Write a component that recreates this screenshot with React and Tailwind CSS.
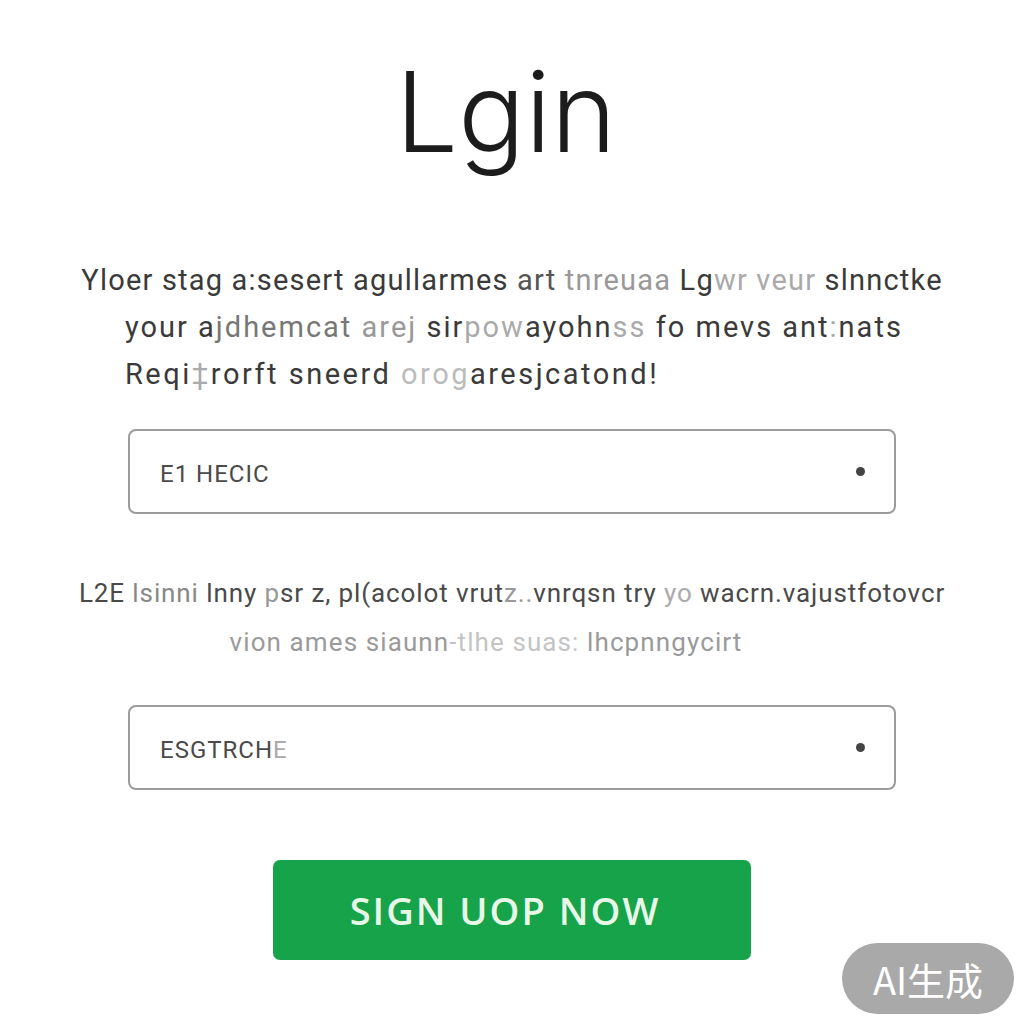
export default function App() {
  return (
    <div className="relative w-full h-screen bg-white overflow-hidden font-['Roboto',sans-serif]">
      <div className="flex flex-col items-center pt-[47px]">
        {/* Title */}
        <h1 className="mr-[12px] font-['Inter',sans-serif] font-light text-[111px] leading-[130px] text-[#1c1c1c] tracking-[0px]">
          Lgin
        </h1>

        {/* Intro copy */}
        <div className="mt-[80px] w-full text-[29px] leading-[47px] text-[#3a3a3a]">
          <p className="text-center whitespace-nowrap tracking-[1.2px]">
            Yloer stag a:sesert agullarmes <span className="text-[#555]">art</span>{" "}
            <span className="text-[#999]">tnreuaa</span> Lg<span className="text-[#aaa]">wr veur</span> slnnctke
          </p>
          <p className="pl-[125px] whitespace-nowrap tracking-[2px]">
            your a<span className="text-[#777]">jdhemcat</span> <span className="text-[#999]">arej</span> sir
            <span className="text-[#aaa]">pow</span>ayohn<span className="text-[#aaa]">ss</span> fo mevs ant
            <span className="text-[#aaa]">:</span>nats
          </p>
          <p className="pl-[125px] whitespace-nowrap tracking-[2.5px]">
            Reqi<span className="text-[#aaa]">‡</span>rorft sneerd <span className="text-[#bbb]">orog</span>
            aresjcatond!
          </p>
        </div>

        {/* Field 1 */}
        <div className="mt-[31px] w-[768px] h-[85px] flex items-center justify-between border-2 border-[#9c9c9c] rounded-[8px] pl-[30px] pr-[29px]">
          <span className="mt-[4px] text-[24px] text-[#4a4a4a] tracking-[1px]">E1 HECIC</span>
          <span className="w-[9px] h-[9px] rounded-full bg-[#444]" />
        </div>

        {/* Helper copy */}
        <div className="mt-[55px] w-full text-[26px] leading-[49px] text-center">
          <p className="whitespace-nowrap text-[#4a4a4a] tracking-[0.9px]">
            L2E <span className="text-[#888]">lsinni</span> lnny <span className="text-[#999]">p</span>sr z, pl(acolot
            vrut<span className="text-[#999]">z..</span>vnrqsn try <span className="text-[#aaa]">yo</span> wacrn.vajustfotovcr
          </p>
          <p className="pr-[52px] whitespace-nowrap text-[#9a9a9a] tracking-[1.1px]">
            vion ames siaunn<span className="text-[#c4c4c4]">-tlhe suas:</span> lhcpnngycirt
          </p>
        </div>

        {/* Field 2 */}
        <div className="mt-[38px] w-[768px] h-[85px] flex items-center justify-between border-2 border-[#9c9c9c] rounded-[8px] pl-[30px] pr-[29px]">
          <span className="mt-[4px] text-[24px] text-[#4a4a4a] tracking-[1px]">
            ESGTRCH<span className="text-[#aaa]">E</span>
          </span>
          <span className="w-[9px] h-[9px] rounded-full bg-[#444]" />
        </div>

        {/* CTA */}
        <button className="mt-[70px] w-[478px] h-[100px] pr-[14px] rounded-[7px] bg-[#17a349] text-[#e8f8e8] font-['Open_Sans',sans-serif] font-semibold text-[38px] tracking-[2px]">
          SIGN UOP NOW
        </button>
      </div>

      {/* Watermark */}
      <div className="absolute right-[10px] bottom-[10px] w-[172px] h-[71px] rounded-full bg-[#a9a9a9] flex items-center justify-center text-white text-[38px] font-['Noto_Sans_CJK_SC',sans-serif]">
        AI生成
      </div>
    </div>
  );
}
